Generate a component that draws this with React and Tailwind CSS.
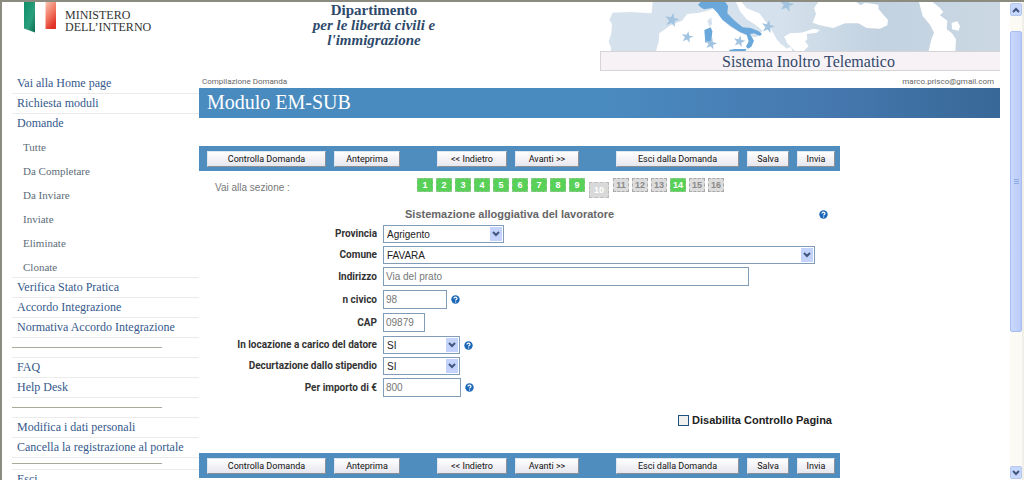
import clsx from 'clsx'

// ── Data ─────────────────────────────────────────────────────
const menu = [
    { label: 'Vai alla Home page' },
    { label: 'Richiesta moduli' },
    { label: 'Domande', children: ['Tutte', 'Da Completare', 'Da Inviare', 'Inviate', 'Eliminate', 'Clonate'] },
    { label: 'Verifica Stato Pratica' },
    { label: 'Accordo Integrazione' },
    { label: 'Normativa Accordo Integrazione' },
    { divider: 'tall' },
    { label: 'FAQ' },
    { label: 'Help Desk' },
    { divider: 'tall' },
    { label: 'Modifica i dati personali' },
    { label: 'Cancella la registrazione al portale' },
    { divider: 'short' },
    { label: 'Esci' },
]

const sezioni = Array.from({ length: 16 }, (_, i) => i + 1)
const corrente = 10
const daCompilare = [11, 12, 13, 15, 16]
// ─────────────────────────────────────────────────────────────

export default function App() {
    return (
        <div className="flex h-screen overflow-hidden border-l-2 border-t-2 border-[#8b8b80] bg-white font-['Liberation_Sans',Arial,sans-serif]">
            <div className="min-w-0 flex-1 overflow-hidden pr-2">
                <Header />
                <div className="flex">
                    <Sidebar />
                    <main className="min-w-0 flex-1 pt-1">
                        <div className="flex h-3 justify-between pl-[3px] pr-2 font-['Roboto',sans-serif] text-[8px] leading-3 text-[#666]">
                            <span>Compilazione Domanda</span>
                            <span>marco.prisco@gmail.com</span>
                        </div>
                        <h1 className="mr-[2px] h-[30px] bg-linear-to-r from-[#4a8bbf] from-50% via-[#4577ae] via-80% to-[#386897] pl-2 font-['Liberation_Serif',serif] text-[20px] leading-[29px] text-white">
                            Modulo EM-SUB
                        </h1>
                        <div className="mt-[28px] max-w-[641px]">
                            <Toolbar />
                            <Sezioni />
                            <Modulo />
                            <Toolbar />
                        </div>
                    </main>
                </div>
            </div>
            <Scrollbar />
        </div>
    )
}

function Header() {
    return (
        <header className="flex h-[70px] pr-[2px] font-['Liberation_Serif',serif]">
            <div className="flex w-[197px] shrink-0 gap-2 pl-[22px]">
                <svg viewBox="0 0 33 32" className="h-8 w-[33px]">
                    <defs>
                        <linearGradient id="verde" x1="0" y1="0" x2="1" y2="1">
                            <stop offset="0" stopColor="#0e8f68" />
                            <stop offset=".6" stopColor="#2b9f7d" />
                            <stop offset="1" stopColor="#0a6a50" />
                        </linearGradient>
                        <linearGradient id="rosso" x1="0" y1="0" x2=".5" y2="1">
                            <stop offset="0" stopColor="#f8c4ae" />
                            <stop offset=".6" stopColor="#f0705c" />
                            <stop offset="1" stopColor="#e23127" />
                        </linearGradient>
                    </defs>
                    <path d="M0 0H11V30.500L0 26.500Z" fill="url(#verde)" />
                    <path d="M21.500 0H32V27H21.500Z" fill="url(#rosso)" />
                </svg>
                <p className="pt-[7px] text-[12px] leading-3 text-[#333]">
                    MINISTERO
                    <br />
                    DELL’INTERNO
                </p>
            </div>
            <p className="w-[350px] shrink-0 pt-[1px] text-center text-[15px] font-bold leading-[15px] text-[#2e4a6b]">
                Dipartimento
                <br />
                <i>per le libertà civili e<br />l'immigrazione</i>
            </p>
            <div className="ml-auto w-[400px]">
                <Mappa />
                <p className="h-5 border border-[#d5d5d8] border-r-0 bg-[#f6f2f6] pl-4 text-center text-[16px] leading-[19px] text-[#33486a]">
                    Sistema Inoltro Telematico
                </p>
            </div>
        </header>
    )
}

function Mappa() {
    const stelle = [[216, 60, 22], [262, 111, 18], [333, 131, 18], [418, 124, 18], [504, 80, 20], [560, 14, 22]]
    return (
        <svg viewBox="0 6 1200 147" preserveAspectRatio="none" className="block h-[49px] w-full">
            <defs>
                <linearGradient id="terra" x1="0" x2="1">
                    <stop offset="0" stopColor="#d5e1ec" />
                    <stop offset=".45" stopColor="#d5e1ec" />
                    <stop offset=".7" stopColor="#c2d2e1" />
                    <stop offset="1" stopColor="#cbd8e3" />
                </linearGradient>
            </defs>
            <rect y="6" width="1200" height="147" fill="url(#terra)" />
            <g fill="#fff">
                <path d="M0 6H158L155 40L90 36L38 38L28 60L36 72L34 100L26 125L34 145L32 153H0Z" />
                <path d="M168 153L176 125L178 100L212 76L246 62L262 42L298 38L322 32L345 24L360 52L390 80L420 98L445 108L470 112L488 92L466 74L440 58L420 34L408 6H425L440 25L478 40L495 62L515 90L530 118L545 134L570 138L578 153Z" />
                <path d="M552 110L570 100L600 98L612 96L640 86L660 90L650 98L620 102L622 118L615 124L626 138L612 153H585L570 138L545 132L560 124Z" />
                <path d="M655 6H768L782 16L795 8L835 14L836 28L864 60L862 76L840 86L800 84L775 70L735 70L700 84L660 76L638 68L648 42L642 24Z" />
                <path d="M957 6H998L1020 24L1030 36L1020 46L1042 62L1040 88L1056 100L1068 118L1066 153H986L994 118L1002 98L990 74L968 48Z" />
                <path d="M1055 68L1072 64L1080 78L1076 92L1056 88Z" />
            </g>
            <path d="M536 116L556 124L572 140L560 146L545 132Z" fill="#d5e1ec" />
            <g fill="#6aa8dc">
                <path d="M294 14L302 6H376L384 18L382 40L404 62L428 82L452 84L476 94L486 102L480 108L462 100L450 102L462 122L454 140L444 146L438 140L446 124L440 104L420 96L392 78L368 60L352 38L338 24L312 28L302 22Z" />
                <path d="M386 150L404 147L440 147L436 153H390Z" />
                <path d="M313 90L332 82L337 94L334 124L316 128Z" />
            </g>
            <path d="M322 62L334 52L336 72L328 80Z" fill="#d5e1ec" />
            {stelle.map(([x, y, r]) => (
                <path
                    key={x}
                    d="M0 -1L.24 -.32L1 -.3L.38 .14L.6 .85L0 .42L-.6 .85L-.38 .14L-1 -.3L-.24 -.32Z"
                    transform={`translate(${x} ${y}) rotate(12) scale(${r})`}
                    fill="#a3c4e0"
                />
            ))}
        </svg>
    )
}

function Sidebar() {
    return (
        <nav className="w-[197px] shrink-0 pl-[10px] pt-[2px] font-['Liberation_Serif',serif] text-[12px] text-[#35598c]">
            <ul>
                {menu.map((voce, i) => (
                    <li key={i} className="border-b border-[#ebebeb]">
                        {voce.divider ? (
                            <div className={clsx('flex items-center', voce.divider === 'tall' ? 'h-[19px]' : 'h-[11px]')}>
                                <hr className="w-[150px] border-[#aaa898]" />
                            </div>
                        ) : (
                            <a href="#" className="block whitespace-nowrap pl-[5px] leading-[19px]">{voce.label}</a>
                        )}
                        {voce.children && (
                            <ul className="h-36 pt-[2px] text-[11px] text-[#5d6d78]">
                                {voce.children.map(c => (
                                    <li key={c}>
                                        <a href="#" className="block pl-[11px] leading-6">{c}</a>
                                    </li>
                                ))}
                            </ul>
                        )}
                    </li>
                ))}
            </ul>
        </nav>
    )
}

function Toolbar() {
    return (
        <div className="flex h-[25px] items-center bg-[#4f8dbf] pl-2 pr-[5px]">
            <ToolbarButton className="w-[119px]">Controlla Domanda</ToolbarButton>
            <ToolbarButton className="ml-2 w-[66px]">Anteprima</ToolbarButton>
            <ToolbarButton className="ml-auto w-[70px]">&lt;&lt; Indietro</ToolbarButton>
            <ToolbarButton className="ml-2 w-[64px]">Avanti &gt;&gt;</ToolbarButton>
            <ToolbarButton className="ml-auto w-[123px]">Esci dalla Domanda</ToolbarButton>
            <ToolbarButton className="ml-2 w-[42px]">Salva</ToolbarButton>
            <ToolbarButton className="ml-2 w-[38px]">Invia</ToolbarButton>
        </div>
    )
}

function ToolbarButton({ className, children }) {
    return (
        <button
            type="button"
            className={clsx(
                "h-4 whitespace-nowrap border border-b-[#8a8f98] border-l-[#dfe8f2] border-r-[#8a8f98] border-t-[#dfe8f2] bg-linear-to-b from-white to-[#e6e6ee] font-['Roboto',sans-serif] text-[9px] leading-[15px] text-[#111]",
                className,
            )}
        >
            {children}
        </button>
    )
}

function Sezioni() {
    return (
        <div className="flex h-[34px] pl-4 pt-[7px] text-[10px] text-[#777]">
            <span className="w-[202px] leading-5">Vai alla sezione :</span>
            <div className="flex gap-[3px]">
                {sezioni.map(n => (
                    <button
                        key={n}
                        type="button"
                        className={clsx(
                            'border border-dashed text-[9px] font-bold leading-3',
                            n === corrente && 'mx-[1px] mt-1 h-4 w-5 border-[#bbb] bg-[#d9d9d9] text-white',
                            daCompilare.includes(n) && 'h-[14px] w-4 border-[#aaa] bg-[#dcdcdc] text-[#8a8a8a]',
                            n !== corrente && !daCompilare.includes(n) && 'h-[14px] w-4 border-[#8fc98f] bg-[#59d159] text-white',
                        )}
                    >
                        {n}
                    </button>
                ))}
            </div>
        </div>
    )
}

function Modulo() {
    return (
        <form className="h-[248px]">
            <div className="flex h-5 items-center pb-[2px] pl-[206px] pr-3">
                <h2 className="text-[11px] font-bold text-[#666]">Sistemazione alloggiativa del lavoratore</h2>
                <Help className="ml-auto" />
            </div>
            <CampoSelect id="provincia" label="Provincia" value="Agrigento" width="w-[121px]" />
            <CampoSelect id="comune" label="Comune" value="FAVARA" width="w-[432px]" />
            <CampoTesto id="indirizzo" label="Indirizzo" value="Via del prato" width="w-[366px]" />
            <CampoTesto id="civico" label="n civico" value="98" width="w-[64px]" help />
            <CampoTesto id="cap" label="CAP" value="09879" width="w-[42px]" />
            <CampoSelect id="locazione" label="In locazione a carico del datore" value="SI" width="w-[77px]" help />
            <CampoSelect id="decurtazione" label="Decurtazione dallo stipendio" value="SI" width="w-[77px]" />
            <CampoTesto id="importo" label="Per importo di €" value="800" width="w-[78px]" help />
            <label className="mt-[15px] flex items-center justify-end gap-[3px] pr-2 text-[11px] font-bold text-[#222]">
                <input type="checkbox" className="size-[11px] appearance-none border border-[#1c5180] bg-[#f0f0ee]" />
                Disabilita Controllo Pagina
            </label>
        </form>
    )
}

function Etichetta({ id, children }) {
    return (
        <label htmlFor={id} className="w-[180px] shrink-0 whitespace-nowrap pr-[2px] text-right font-['Roboto',sans-serif] text-[10px] font-bold leading-4 text-[#333]">
            {children}
        </label>
    )
}

function CampoSelect({ id, label, value, width, help }) {
    return (
        <div className="mb-[3px] flex h-[18px] items-center gap-1">
            <Etichetta id={id}>{label}</Etichetta>
            <div className={clsx('relative', width)}>
                <select id={id} defaultValue={value} className="block h-[18px] w-full appearance-none border border-[#7f9db9] bg-white pl-[3px] text-[10px] text-[#222]">
                    <option>{value}</option>
                </select>
                <span className="pointer-events-none absolute right-[2px] top-[2px] flex h-[14px] w-3 items-center justify-center bg-[#c3d3fb]">
                    <Chevron />
                </span>
            </div>
            {help && <Help />}
        </div>
    )
}

function CampoTesto({ id, label, value, width, help }) {
    return (
        <div className="mb-1 flex h-[19px] items-center gap-1">
            <Etichetta id={id}>{label}</Etichetta>
            <input id={id} type="text" defaultValue={value} className={clsx('h-[19px] border border-[#7f9db9] bg-white pl-[2px] text-[10px] text-[#777]', width)} />
            {help && <Help />}
        </div>
    )
}

function Chevron({ up }) {
    return (
        <svg viewBox="0 0 8 6" className={clsx('h-[6px] w-2', up && 'rotate-180')} fill="none" stroke="#42577f" strokeWidth="2">
            <path d="M1 1L4 4L7 1" />
        </svg>
    )
}

function Help({ className }) {
    return (
        <svg viewBox="0 0 9 9" className={clsx('size-[9px] shrink-0', className)} role="img" aria-label="Aiuto">
            <circle cx="4.500" cy="4.500" r="4.200" fill="#1b67b8" />
            <path d="M3 3.600C3 1.700 6 1.700 6 3.500C6 4.500 4.600 4.400 4.600 5.500M4.600 6.400V7.400" fill="none" stroke="#fff" strokeWidth="1.200" />
        </svg>
    )
}

function Scrollbar() {
    return (
        <div className="flex w-[14px] shrink-0 flex-col border-r-2 border-[#f0efe8] bg-[#fbfaf5]">
            <span className="mt-[1px] flex h-[13px] items-center justify-center rounded-xs border border-[#b4c8f2] bg-[#c8d7fc]">
                <Chevron up />
            </span>
            <span className="mt-[15px] flex h-[301px] flex-col items-center justify-center gap-[1px] rounded-xs border border-[#a9bdf0] bg-linear-to-r from-[#c9d8ff] to-[#b9cbf8]">
                <i className="h-[1px] w-[5px] bg-[#8ea8e4]" />
                <i className="h-[1px] w-[5px] bg-[#8ea8e4]" />
                <i className="h-[1px] w-[5px] bg-[#8ea8e4]" />
            </span>
            <span className="mb-[1px] mt-auto flex h-[13px] items-center justify-center rounded-xs border border-[#b4c8f2] bg-[#c8d7fc]">
                <Chevron />
            </span>
        </div>
    )
}
